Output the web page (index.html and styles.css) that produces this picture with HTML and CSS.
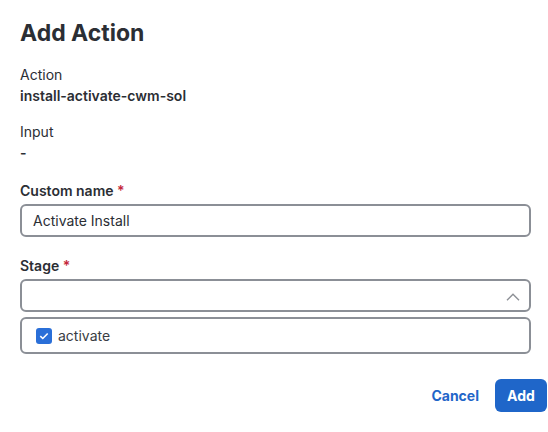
FILE: index.html
```html
<!DOCTYPE html>
<html>
<head>
<meta charset="utf-8">
<link rel="stylesheet" href="styles.css">
</head>
<body>
<div class="dialog">
  <h1 class="title">Add Action</h1>
  <div class="field">
    <div class="label">Action</div>
    <div class="value">install-activate-cwm-sol</div>
  </div>
  <div class="field">
    <div class="label">Input</div>
    <div class="value">-</div>
  </div>
  <div class="form-group">
    <div class="form-label">Custom name <span class="req">*</span></div>
    <div class="input">Activate Install</div>
  </div>
  <div class="form-group stage">
    <div class="form-label">Stage <span class="req">*</span></div>
    <div class="select">
      <svg class="chevron" width="14" height="8" viewBox="0 0 14 8"><path d="M1 7.2 L7 1.2 L13 7.2" fill="none" stroke="#8d9096" stroke-width="1.4"/></svg>
    </div>
    <div class="listbox">
      <div class="option">
        <span class="checkbox"><svg width="10" height="8" viewBox="0 0 10 8"><path d="M1.3 4.2 L3.8 6.5 L8.7 1.5" fill="none" stroke="#fff" stroke-width="1.6"/></svg></span>
        <span class="opt-text">activate</span>
      </div>
    </div>
  </div>
  <div class="actions">
    <button class="btn-link">Cancel</button>
    <button class="btn-primary">Add</button>
  </div>
</div>
</body>
</html>
```
FILE: styles.css
```css
html, body {
  margin: 0;
  padding: 0;
  background: #ffffff;
}
body {
  font-family: Inter, "Noto Sans", sans-serif;
  color: #2b2e34;
}
.dialog {
  padding: 19px 17px 0 20px;
  display: flex;
  flex-direction: column;
}
.title {
  margin: 0;
  font-size: 23px;
  font-weight: 700;
  line-height: 28px;
  color: #2b2e34;
}
.field {
  margin-top: 17px;
  font-size: 14px;
  line-height: 21px;
}
.field + .field {
  margin-top: 15px;
}
.label {
  font-weight: 400;
}
.value {
  font-weight: 600;
}
.form-group {
  margin-top: 17px;
  display: flex;
  flex-direction: column;
}
.form-group.stage {
  margin-top: 18px;
}
.form-label {
  font-size: 14px;
  font-weight: 600;
  line-height: 21px;
  margin-bottom: 3px;
}
.req {
  color: #c4273a;
}
.input, .select, .listbox {
  box-sizing: border-box;
  border: 2px solid #8b8f96;
  border-radius: 6px;
  height: 33px;
  font-size: 14px;
  color: #2b2e34;
}
.input {
  display: flex;
  align-items: center;
  padding-left: 11px;
}
.select {
  display: flex;
  align-items: center;
  justify-content: flex-end;
  padding-right: 9px;
}
.chevron {
  margin-top: 3px;
}
.listbox {
  margin-top: 5px;
  height: 37px;
  display: flex;
  align-items: center;
  padding-left: 14px;
}
.option {
  display: flex;
  align-items: center;
  gap: 6px;
}
.checkbox {
  width: 16px;
  height: 16px;
  border-radius: 3px;
  background: #2a6fd8;
  display: flex;
  align-items: center;
  justify-content: center;
}
.opt-text {
  color: #3a3d43;
}
.actions {
  margin-top: 25px;
  display: flex;
  justify-content: flex-end;
  align-items: center;
  gap: 16px;
  margin-right: -16px;
}
.btn-link {
  border: none;
  background: none;
  font-family: inherit;
  font-size: 14px;
  font-weight: 700;
  color: #1f66c9;
  padding: 0;
}
.btn-primary {
  border: none;
  background: #1f66c9;
  color: #ffffff;
  font-family: inherit;
  font-size: 14px;
  font-weight: 700;
  height: 33px;
  width: 52px;
  border-radius: 6px;
  padding: 0;
}
```
